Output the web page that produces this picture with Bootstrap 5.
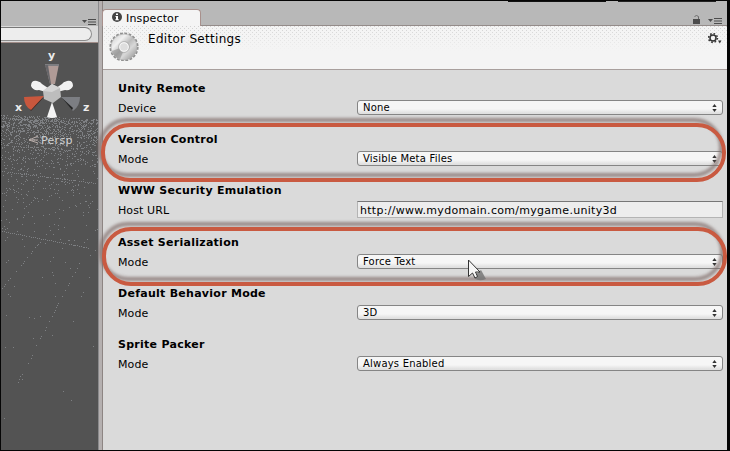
<!DOCTYPE html>
<html lang="en">
<head>
<meta charset="utf-8">
<meta name="viewport" content="width=device-width, initial-scale=1">
<title>Editor Settings</title>
<link rel="stylesheet" href="https://cdn.jsdelivr.net/npm/bootstrap@5.3.0/dist/css/bootstrap.min.css">
<style>
body{font-family:"DejaVu Sans",Verdana,sans-serif;font-size:11px;line-height:14px;color:#000;background:#000}
svg{display:block}
.editor{width:730px;height:451px;padding:1px 3px 1px 1px;background:#050505}
.scene{width:97px;background:#535353}
.scene-strip{height:25px;background:#b8b8b8;padding:18px 2px 0 0}
.scene-search{height:17px;background:#dadada;padding:1px 6px 2px 0;border-bottom:1px solid #a08c88}
.scene-search .field{height:14px;background:#ededed;border:1px solid #8c8c8c;border-left:0;border-top:1.5px solid #777;border-radius:0 7px 7px 0}
.split{width:5px;background:linear-gradient(90deg,#8a8a8c 0 1px,#b5b0b0 1px 4px,#8d8583 4px)}
.tabs{height:25px;background:#b8b8b8;border-bottom:1px solid #948c8a}
.tab{width:99px;height:17px;margin-left:-1px;margin-bottom:-1px;background:#f4f4f4;border:1px solid #a8908c;border-bottom:0;border-radius:4px 4px 0 0;padding:1px 0 0 9px}
.tab span{margin-left:4px;letter-spacing:.15px;padding-top:1px}
.tabs-tools{padding:0 5px 1px 0}
.head{height:44px;border-bottom:1px solid #a89f9d;padding:3px 5px 0;background:linear-gradient(rgba(244,244,244,0),#f4f4f4 25px),radial-gradient(circle at 1.5px 1.5px,#d0d0d0 .7px,transparent .8px) 0 1px/4px 4px,radial-gradient(circle at 1.5px 1.5px,#d0d0d0 .7px,transparent .8px) 2px 3px/4px 4px,#f4f4f4}
.head .ttl{font-size:12px;margin:3px 0 0 8px;line-height:15px;letter-spacing:.3px}
.panel{background:#dadada}
.sections{padding:10px 4px 0 15px}
.sect{height:51px}
.sect.tall{height:52px}
.sect h6{font-size:11px;font-weight:700;line-height:18px;height:20px;margin:0;letter-spacing:.27px;white-space:nowrap}
.prop{height:15px}
.prop label{width:239px;line-height:17px;letter-spacing:.1px}
.drop{height:15px;border:1px solid #858585;border-radius:3px;background:linear-gradient(#f6f6f6 0 8px,#e0e0e0 12px);padding:0 5px;font-size:10px;line-height:13px;letter-spacing:.2px}
.url{height:17px;margin-top:-1px;border:1px solid #b4b4b4;border-top:1px solid #777;background:#ededed;padding-left:2px;line-height:17px;letter-spacing:.29px;white-space:nowrap;overflow:hidden}
.ring{position:absolute;border:4px solid #c95a41;border-radius:29px;pointer-events:none;filter:drop-shadow(-3px -5px 1.5px rgba(125,105,102,.7))}
.r1{left:101px;top:123px;width:625px;height:59px}
.r2{left:102px;top:227px;width:625px;height:59px}
.cursor{position:absolute;left:467px;top:258px}
.chrome-edge{position:absolute;left:508px;top:1px;width:208px;height:1px;background:linear-gradient(90deg,#111 0 98px,#b8b8b8 98px 110px,#222 110px)}
</style>
<script src="https://cdn.jsdelivr.net/npm/bootstrap@5.3.0/dist/js/bootstrap.bundle.min.js"></script>
</head>
<body class="m-0 overflow-hidden">
<svg width="0" height="0" class="position-absolute">
  <symbol id="menu" viewBox="0 0 14 6"><path d="M0 1h5L2.500 4z" fill="#4c4c4c"/><path d="M6 .5h8M6 3h8M6 5.500h8" stroke="#4c4c4c"/></symbol>
  <symbol id="updown" viewBox="0 0 5 8"><path d="M.3 3h4.400L2.500 0zM.3 5h4.400L2.500 8z" fill="#333"/></symbol>
</svg>
<div class="editor position-relative d-flex overflow-hidden">
  <div class="scene flex-shrink-0 d-flex flex-column">
    <div class="scene-strip d-flex justify-content-end"><svg width="14" height="6"><use href="#menu"/></svg></div>
    <div class="scene-search"><div class="field"></div></div>
    <svg width="97" height="406" viewBox="1 43 97 406">
      <g id="grid" fill="none" shape-rendering="crispEdges"></g>
      <path d="M45 64h14l-4 20h-5z" fill="#b09b96"/><path d="M45 64h14v2H45z" fill="#7d7d80"/><path d="M45 65l5 19h1L48 65z" fill="#66666a"/>
      <path d="M44 97L31 111l-2-3z" fill="#3a2420"/><path d="M24 97l20-1-13 14q-7-4-7-13z" fill="#c9573d"/>
      <path d="M61 97h19q0 9-7 14z" fill="#7c7e83"/><path d="M61 97l11 13 1-2z" fill="#252525"/>
      <path d="M46 92l-7-2q-6 1-8-4 0-6 6-5 4 1 5 3l6 4zM57 92l8-2q6 1 8-4 0-6-6-5-4 1-5 3l-6 4z" fill="#f2f2f2"/>
      <path d="M52 84l8 4 1 9-8 6-9-4-1-8z" fill="#bdbdbd"/><path d="M52 84l8 4-8 4-9-1z" fill="#d4d4d4"/>
      <path d="M52 102l5 15q-5 2-10 0z" fill="#f4f4f4"/>
      <g fill="#ececec" font-family="DejaVu Sans,sans-serif" font-size="11" font-weight="700"><text x="48" y="59">y</text><text x="15" y="111">x</text><text x="83" y="111">z</text></g>
      <path d="M38 136l-9 4 9 3M29 140h9" fill="none" stroke="#b8aca8"/>
      <text x="41" y="144" fill="#d2d2d2" font-family="DejaVu Sans,sans-serif" font-size="11" letter-spacing=".3">Persp</text>
    </svg>
  </div>
  <div class="split flex-shrink-0"></div>
  <div class="panel flex-grow-1">
    <div class="tabs d-flex align-items-end justify-content-between">
      <div class="tab d-flex align-items-center">
        <svg width="10" height="10" viewBox="0 0 10 10" class="mb-1"><circle cx="5" cy="5" r="5" fill="#444"/><path d="M4 1.500h2v1.600H4zM3.500 4H6v3.200h.8v1H3.300v-1H4V5h-.5z" fill="#fff"/></svg>
        <span>Inspector</span>
      </div>
      <div class="tabs-tools d-flex align-items-end">
        <svg width="7" height="9" viewBox="0 0 7 9" class="me-1"><path d="M0 4h7v5H0z" fill="#4c4c4c"/><path d="M1.500 1.500Q3.500-.5 5.500 1.500V4" fill="none" stroke="#6a6a6a"/></svg>
        <svg width="14" height="6" class="ms-1"><use href="#menu"/></svg>
      </div>
    </div>
    <div class="head d-flex align-items-start">
      <svg width="32" height="32" viewBox="0 0 32 32">
        <defs><linearGradient id="gg" x1="0" y1="0" x2="1" y2="1"><stop offset="0" stop-color="#c8c8c8"/><stop offset=".3" stop-color="#f0f0f0"/><stop offset=".5" stop-color="#bcbcbc"/><stop offset=".65" stop-color="#d8d8d8"/><stop offset="1" stop-color="#868686"/></linearGradient></defs>
        <circle cx="16" cy="18" r="13.600" fill="none" stroke="#8f8f8f" stroke-width="2" stroke-dasharray="2.800 1.470"/>
        <circle cx="16" cy="18" r="13" fill="url(#gg)" stroke="#aaa" stroke-width=".6"/>
        <path d="M4 22l8-3 3 4-3 7q-6-2-8-8z" fill="#777" opacity=".45"/>
        <circle cx="16" cy="18" r="4.500" fill="#dedede" stroke="#f8f8f8" stroke-width="1.300"/><circle cx="16" cy="18" r="5.400" fill="none" stroke="#999" stroke-width=".6"/>
      </svg>
      <div class="ttl">Editor Settings</div>
      <svg class="ms-auto mt-1" width="14" height="12" viewBox="0 0 14 12"><circle cx="5" cy="5" r="3" fill="none" stroke="#333" stroke-width="1.500"/><circle cx="5" cy="5" r="4.400" fill="none" stroke="#333" stroke-width="1.500" stroke-dasharray="1.600 1.855"/><path d="M10 7.500h3.500l-1.700 3z" fill="#333"/></svg>
    </div>
    <div class="sections">
      <div class="sect"><h6>Unity Remote</h6><div class="prop d-flex"><label>Device</label><div class="drop flex-grow-1 d-flex justify-content-between align-items-center"><span>None</span><svg width="5" height="8"><use href="#updown"/></svg></div></div></div>
      <div class="sect"><h6>Version Control</h6><div class="prop d-flex"><label>Mode</label><div class="drop flex-grow-1 d-flex justify-content-between align-items-center"><span>Visible Meta Files</span><svg width="5" height="8"><use href="#updown"/></svg></div></div></div>
      <div class="sect tall"><h6>WWW Security Emulation</h6><div class="prop d-flex"><label>Host URL</label><div class="url flex-grow-1">http://www.mydomain.com/mygame.unity3d</div></div></div>
      <div class="sect"><h6>Asset Serialization</h6><div class="prop d-flex"><label>Mode</label><div class="drop flex-grow-1 d-flex justify-content-between align-items-center"><span>Force Text</span><svg width="5" height="8"><use href="#updown"/></svg></div></div></div>
      <div class="sect"><h6>Default Behavior Mode</h6><div class="prop d-flex"><label>Mode</label><div class="drop flex-grow-1 d-flex justify-content-between align-items-center"><span>3D</span><svg width="5" height="8"><use href="#updown"/></svg></div></div></div>
      <div class="sect"><h6>Sprite Packer</h6><div class="prop d-flex"><label>Mode</label><div class="drop flex-grow-1 d-flex justify-content-between align-items-center"><span>Always Enabled</span><svg width="5" height="8"><use href="#updown"/></svg></div></div></div>
    </div>
  </div>
  <div class="chrome-edge"></div>
  <div class="ring r1"></div>
  <div class="ring r2"></div>
  <svg class="cursor" width="22" height="24" viewBox="0 0 22 24"><path d="M7 18l7-6 5 9q-7 3-12-1z" fill="#777" opacity=".85"/><path d="M1.500 2v16.500l4-3.500 2.500 5 2.500-1.500-2-4.500h4.500z" fill="#f6f6f6" stroke="#333"/></svg>
</div>
<script>
  // Perspective floor grid drawn as single-pixel dots: rows bunch at the horizon, density falls with distance from it.
  let seed = 7;
  const rnd = () => (seed = seed * 16807 % 2147483647) / 2147483647;
  let dots = '';
  const dot = (x, y) => { dots += `M${Math.round(x)} ${Math.round(y)}h1v1h-1z`; };
  for (let y = 114; y < 450; y++) {
    const p = Math.min(.36, .42 * Math.exp(-(y - 114) / 28)) + (y < 350 ? .003 : .0008);
    for (let x = 1; x < 98; x++) if (y > 114 + x * .05 && rnd() < p) dot(x, y);
  }
  const line = (x1, y1, x2, y2, step, keep) => {
    const n = Math.hypot(x2 - x1, y2 - y1) / step;
    for (let i = 0; i <= n; i++) if (rnd() < keep) dot(x1 + (x2 - x1) * i / n, y1 + (y2 - y1) * i / n);
  };
  line(2, 171, 97, 183, 2, .85);
  line(2, 231, 90, 248, 2, .9);
  line(2, 145, 97, 152, 2, .7);
  line(2, 130, 97, 136, 2, .7);
  line(2, 118, 97, 123, 2, .9);
  line(85, 252, 35, 348, 2.500, .5);
  line(35, 350, 14, 388, 3, .4);
  line(2, 288, 70, 205, 2.500, .6);
  line(2, 195, 60, 140, 2.500, .6);
  line(2, 228, 90, 148, 3, .5);
  line(2, 148, 35, 120, 2, .7);
  document.getElementById('grid').innerHTML = `<path d="${dots}" fill="#7e8083"/>`;
</script>
</body>
</html>
